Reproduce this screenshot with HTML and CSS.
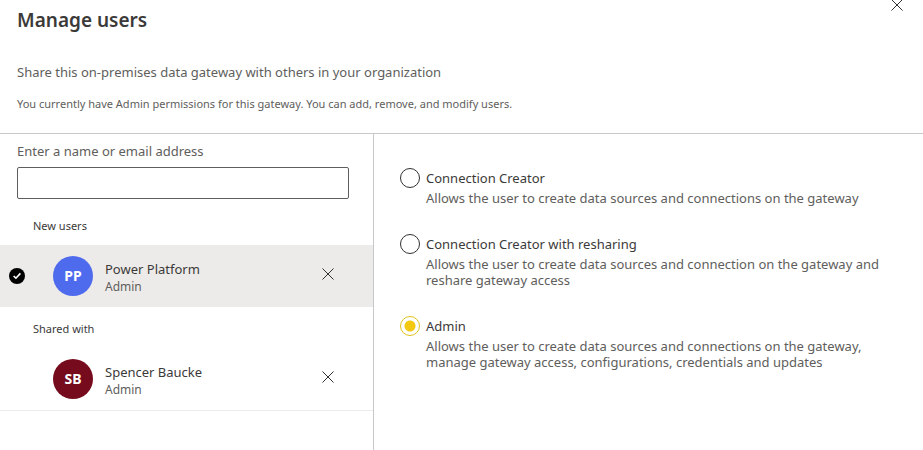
FILE: index.html
```html
<!DOCTYPE html>
<html lang="en">
<head>
  <meta charset="UTF-8">
  <meta name="viewport" content="width=device-width, initial-scale=1">
  <title>Manage users</title>
  <link rel="stylesheet" href="styles.css">
</head>
<body>

  <header class="panel-header">
    <div class="panel-intro">
      <h1>Manage users</h1>
      <p class="subtitle">Share this on-premises data gateway with others in your organization</p>
      <p class="note">You currently have Admin permissions for this gateway. You can add, remove, and modify users.</p>
    </div>
    <button type="button" class="icon-button close-panel" aria-label="Close">
      <svg class="icon-x" viewBox="0 0 12 12"><path d="M0.5 0.5 L11.5 11.5 M11.5 0.5 L0.5 11.5"/></svg>
    </button>
  </header>

  <main class="panel-body">
    <section class="users">
      <div class="search">
        <label for="user-search">Enter a name or email address</label>
        <input type="text" id="user-search">
      </div>

      <h2>New users</h2>
      <ul class="user-list">
        <li class="user selected">
          <svg class="check" viewBox="0 0 16 16">
            <circle cx="8" cy="8" r="8"/>
            <path d="M4.6 8 L6.9 10.2 L11.4 5.4"/>
          </svg>
          <span class="avatar avatar-blue">PP</span>
          <div class="user-info">
            <div class="user-name">Power Platform</div>
            <div class="user-role">Admin</div>
          </div>
          <button type="button" class="icon-button remove-user" aria-label="Remove Power Platform">
            <svg class="icon-x" viewBox="0 0 12 12"><path d="M0.5 0.5 L11.5 11.5 M11.5 0.5 L0.5 11.5"/></svg>
          </button>
        </li>
      </ul>

      <h2>Shared with</h2>
      <ul class="user-list">
        <li class="user">
          <span class="avatar avatar-red">SB</span>
          <div class="user-info">
            <div class="user-name">Spencer Baucke</div>
            <div class="user-role">Admin</div>
          </div>
          <button type="button" class="icon-button remove-user" aria-label="Remove Spencer Baucke">
            <svg class="icon-x" viewBox="0 0 12 12"><path d="M0.5 0.5 L11.5 11.5 M11.5 0.5 L0.5 11.5"/></svg>
          </button>
        </li>
      </ul>
    </section>

    <section class="roles">
      <div class="role">
        <input type="radio" name="role" id="role-creator">
        <div class="role-text">
          <label for="role-creator">Connection Creator</label>
          <p>Allows the user to create data sources and connections on the gateway</p>
        </div>
      </div>
      <div class="role">
        <input type="radio" name="role" id="role-reshare">
        <div class="role-text">
          <label for="role-reshare">Connection Creator with resharing</label>
          <p>Allows the user to create data sources and connection on the gateway and reshare gateway access</p>
        </div>
      </div>
      <div class="role">
        <input type="radio" name="role" id="role-admin" checked>
        <div class="role-text">
          <label for="role-admin">Admin</label>
          <p>Allows the user to create data sources and connections on the gateway, manage gateway access, configurations, credentials and updates</p>
        </div>
      </div>
    </section>
  </main>

</body>
</html>
```
FILE: styles.css
```css
* {
  box-sizing: border-box;
}

body {
  display: flex;
  flex-direction: column;
  min-height: 100vh;
  margin: 0;
  background-color: #fff;
  color: #3b3a39;
  font-family: 'Segoe UI', 'Noto Sans', 'Open Sans', sans-serif;
  font-size: 13px;
  line-height: 20px;
}

h1, h2, p, ul {
  margin: 0;
  padding: 0;
}

/* Header */
.panel-header {
  display: flex;
  justify-content: space-between;
  align-items: flex-start;
  padding: 0 14px 19px 17px;
  border-bottom: 1px solid #c8c8c8;
}

.panel-intro {
  padding-top: 8px;
}

h1 {
  font-size: 19px;
  font-weight: 600;
  line-height: 24px;
}

.subtitle {
  margin-top: 30px;
  color: #605e5c;
}

.note {
  margin-top: 12px;
  color: #605e5c;
  font-size: 11px;
}

.icon-button {
  display: flex;
  justify-content: center;
  align-items: center;
  width: 24px;
  height: 24px;
  padding: 0;
  border: none;
  background: none;
  cursor: pointer;
}

.close-panel {
  height: 10px;
}

.remove-user {
  padding-bottom: 4px;
}

.icon-x {
  flex-shrink: 0;
  width: 12px;
  height: 12px;
  fill: none;
  stroke: #323130;
}

/* Body */
.panel-body {
  display: flex;
  flex: 1;
}

.users {
  flex: 0 0 374px;
  border-right: 1px solid #c8c8c8;
}

.search {
  display: flex;
  flex-direction: column;
  gap: 6px;
  padding: 7px 24px 5px 17px;
  color: #605e5c;
}

.search input {
  height: 32px;
  padding: 0 8px;
  border: 1px solid #605e5c;
  border-radius: 2px;
  font: inherit;
}

h2 {
  padding: 14px 33px 11px;
  font-size: 11px;
  font-weight: 400;
  line-height: 16px;
}

.user-list {
  list-style: none;
}

.user {
  display: flex;
  align-items: center;
  gap: 12px;
  height: 63px;
  padding: 0 33px 0 53px;
  border-bottom: 1px solid #edebe9;
}

.user.selected {
  height: 62px;
  padding-left: 9px;
  border-bottom: none;
  background-color: #edebe9;
}

.check {
  width: 16px;
  height: 16px;
  margin-right: 16px;
}

.check circle {
  fill: #000;
}

.check path {
  fill: none;
  stroke: #fff;
  stroke-width: 1.6;
}

.avatar {
  flex-shrink: 0;
  width: 40px;
  height: 40px;
  border-radius: 50%;
  color: #fff;
  font-size: 14px;
  font-weight: 700;
  line-height: 40px;
  text-align: center;
}

.avatar-blue { background-color: #4f6bed; }
.avatar-red { background-color: #750b1c; }

.user-info {
  flex: 1;
  padding-top: 2px;
}

.user-role {
  color: #605e5c;
  font-size: 12px;
  line-height: 16px;
}

/* Roles */
.roles {
  flex: 1;
  display: flex;
  flex-direction: column;
  gap: 28px;
  padding: 34px 24px 34px 26px;
}

.role {
  display: flex;
  gap: 6px;
}

.role input {
  appearance: none;
  flex-shrink: 0;
  width: 20px;
  height: 20px;
  margin: 0;
  border: 1px solid #323130;
  border-radius: 50%;
}

.role input:checked {
  border-color: #e0c21c;
  background: radial-gradient(circle, #f2c811 5px, #fff 6px);
}

.role label {
  display: block;
}

.role p {
  margin-top: 2px;
  color: #605e5c;
  line-height: 16px;
}
```
